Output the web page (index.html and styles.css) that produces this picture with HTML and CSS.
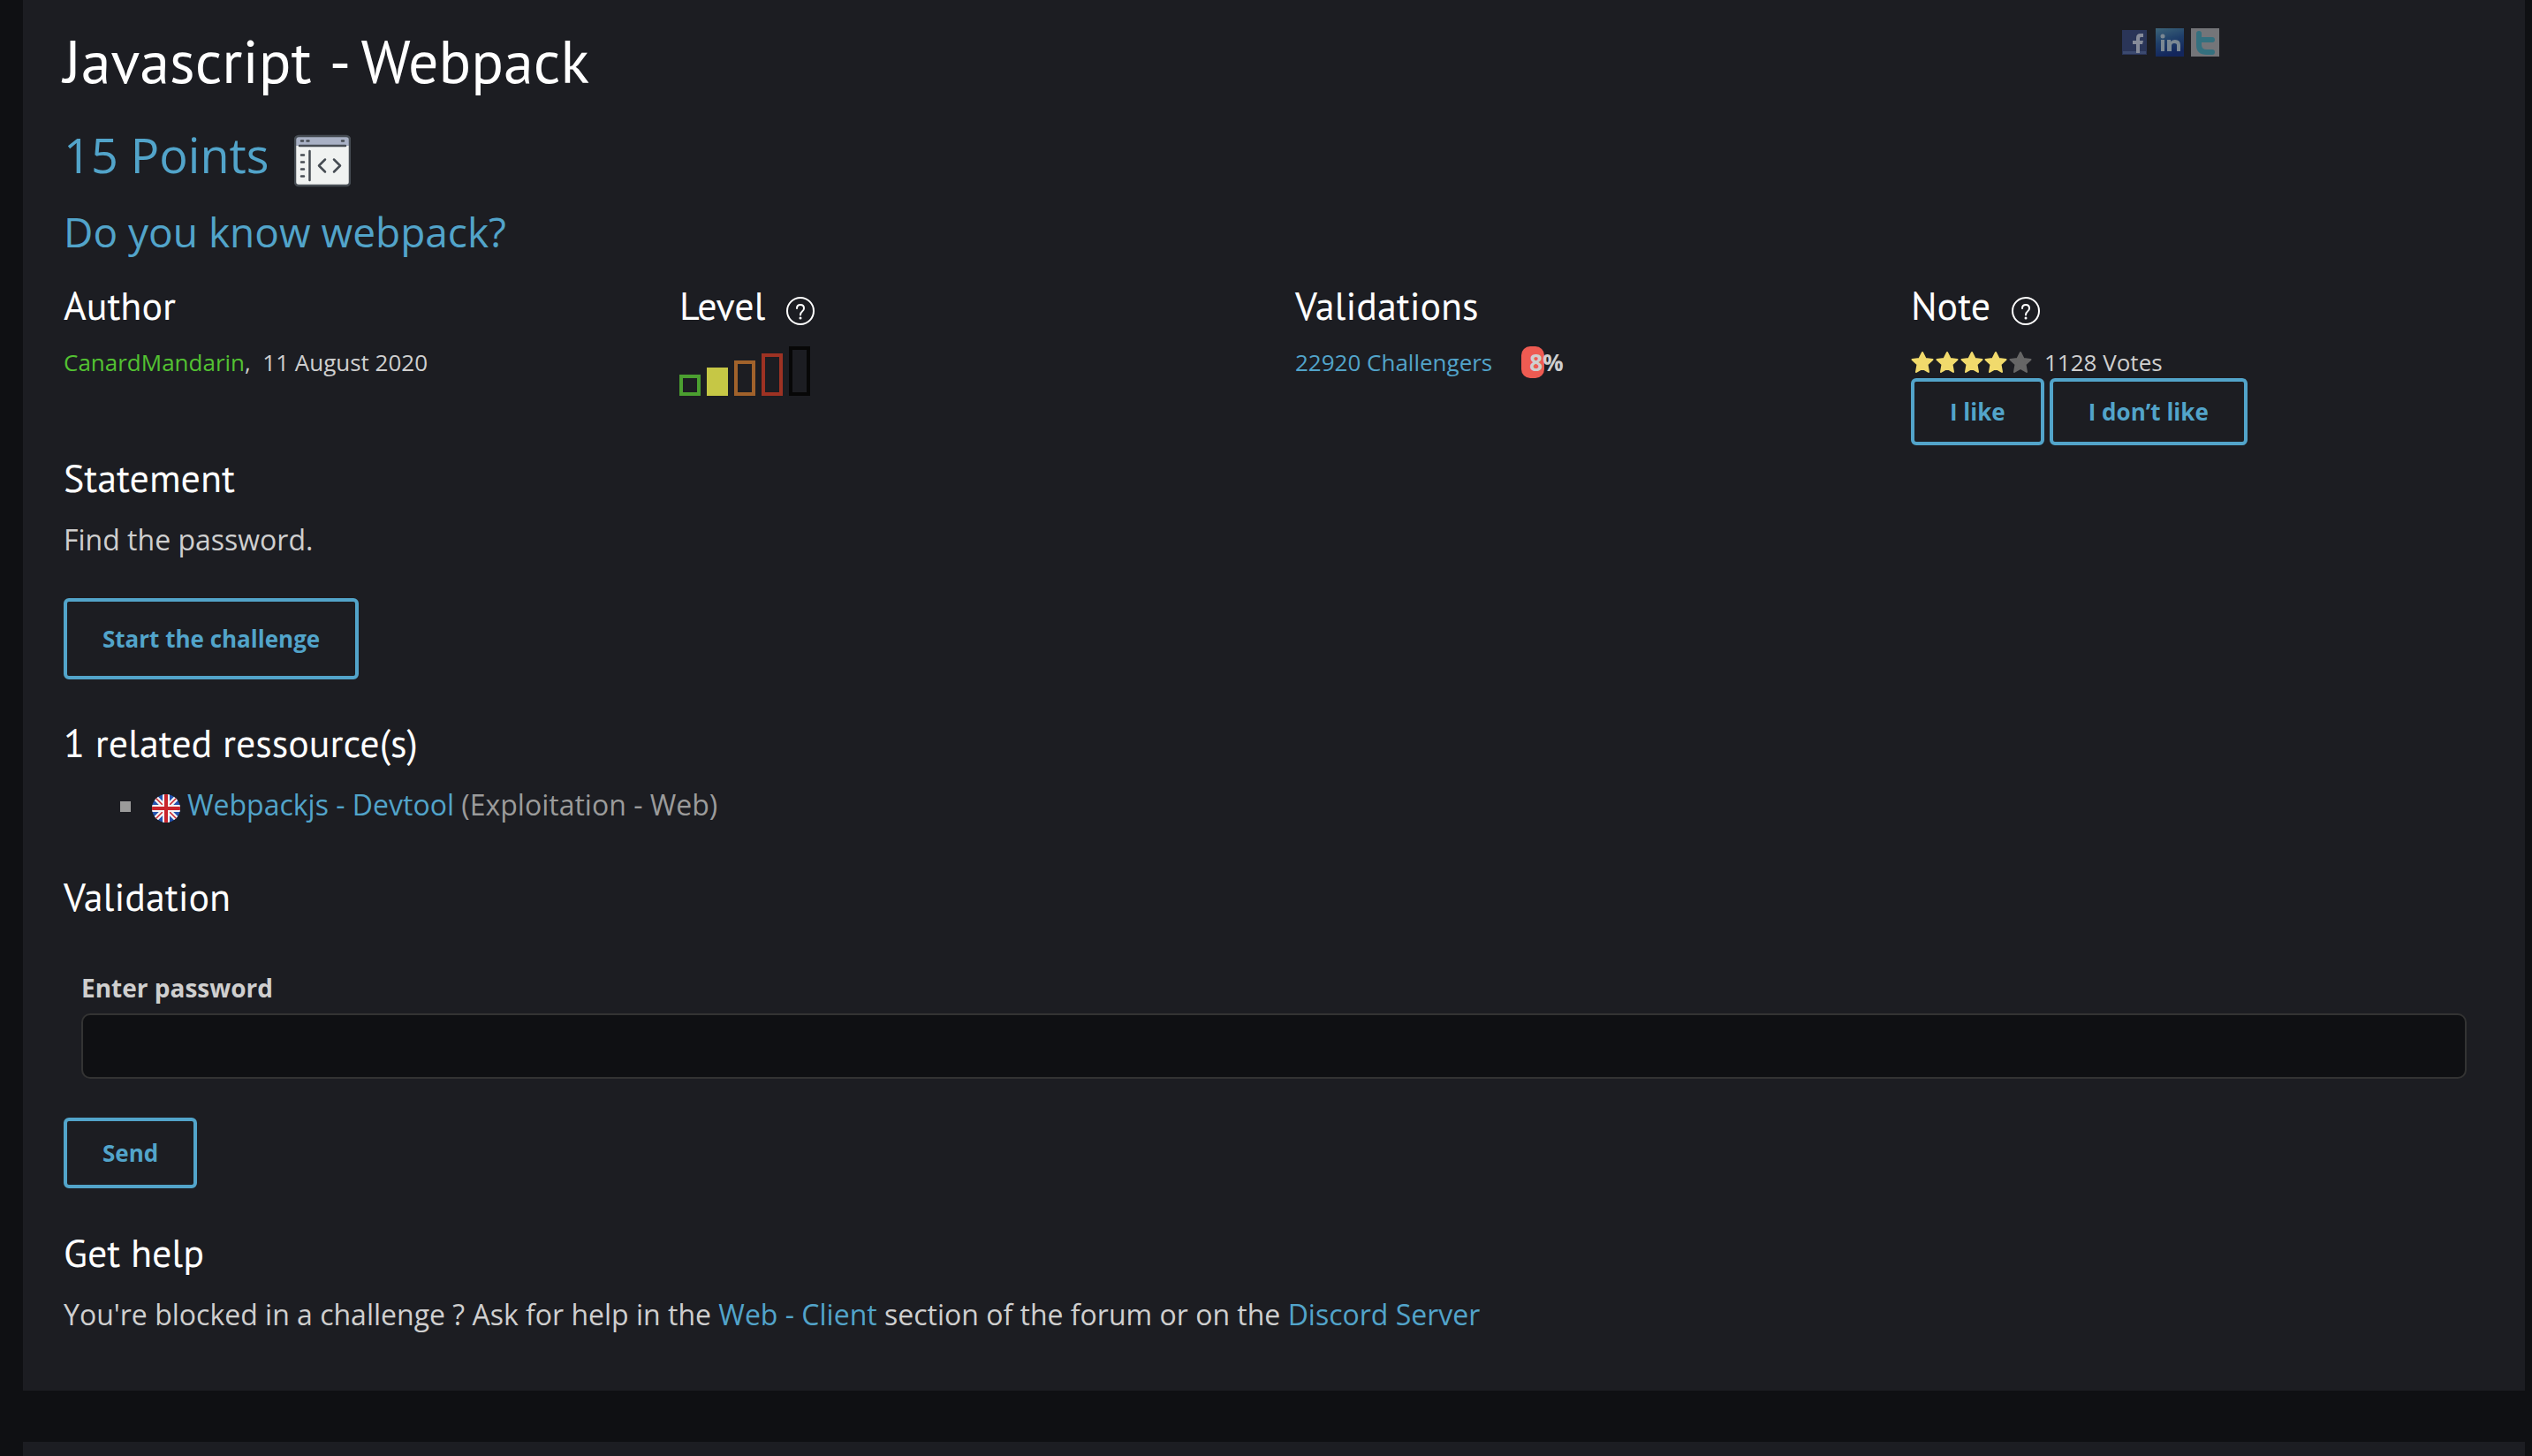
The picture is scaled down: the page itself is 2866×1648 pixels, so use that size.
FILE: index.html
```html
<!DOCTYPE html>
<html lang="en">
<head>
<meta charset="utf-8">
<title>Javascript - Webpack</title>
<link rel="stylesheet" href="styles.css">
</head>
<body>
<main class="panel">
  <header class="title-row">
    <h1 class="title">Javascript <span class="title-name">- Webpack</span></h1>
    <nav class="social" aria-label="Share">
      <a href="#facebook" aria-label="Facebook"><svg class="social-icon" viewBox="0 0 32 32"><rect x="2" y="2" width="28" height="28" fill="#2a3558"/><path d="M3 26h26v3H3z" fill="#3c4a70"/><path d="M18 28V18h-4v-4h4v-3q0-5 5-5h3v4h-3q-1 0-1 2v2h4l-1 4h-3v10z" fill="#868b99"/></svg></a>
      <a href="#linkedin" aria-label="LinkedIn"><svg class="social-icon" viewBox="0 0 32 32"><defs><linearGradient id="li" x1="0" y1="0" x2="0.3" y2="1"><stop offset="0" stop-color="#3d6478"/><stop offset="0.5" stop-color="#20406a"/><stop offset="1" stop-color="#13265c"/></linearGradient></defs><rect width="32" height="32" fill="url(#li)"/><circle cx="8" cy="9" r="2.500" fill="#7b8893"/><path d="M6 13h4v13H6zM13 13h4v2q2-2 5-2 6 0 6 6v7h-4v-7q0-2-3-2t-3 3v6h-5z" fill="#7b8893"/></svg></a>
      <a href="#twitter" aria-label="Twitter"><svg class="social-icon" viewBox="0 0 32 32"><rect width="32" height="32" fill="#747579"/><path d="M9 6v13q0 8 9 8h6M9 13h15" fill="none" stroke="#34707f" stroke-width="6" stroke-linecap="round"/></svg></a>
    </nav>
  </header>

  <div class="points">
    <span>15 Points</span>
    <svg class="points-icon" viewBox="0 0 64 64" aria-hidden="true"><rect x="1" y="4" width="62" height="56" rx="4" fill="#f0f2f1"/><path d="M1 15V8q0-4 4-4h54q4 0 4 4v7z" fill="#a9b1c5"/><rect x="1" y="4" width="62" height="56" rx="4" fill="none" stroke="#464c53" stroke-width="2.500"/><g fill="none" stroke="#464c53" stroke-width="2.500" stroke-linecap="round" stroke-linejoin="round"><path d="M6 15h52M8 9.500h2M14.500 9.500h2M54 9.500h2M8 25.500h3M8 33.500h3M8 41.500h3M8 49.500h3M17.500 21v33"/><path d="m35 30.500-7 7 7 7M45 30.500l7 7-7 7"/></g></svg>
  </div>
  <p class="subtitle">Do you know webpack?</p>

  <div class="facts">
    <section>
      <h2 class="heading">Author</h2>
      <p class="fact"><a class="author" href="#author">CanardMandarin</a>,&nbsp; 11 August 2020</p>
    </section>
    <section>
      <h2 class="heading">Level <svg class="help" viewBox="0 0 32 32" role="img" aria-label="Help"><circle cx="16" cy="16" r="15"/><path d="M12 13q0-4 4-4t4 4q0 2-2 3.500t-2 4"/><circle class="dot" cx="16" cy="24" r="1.500"/></svg></h2>
      <div class="level" role="img" aria-label="Easy">
        <span class="bar bar-1"></span><span class="bar bar-2"></span><span class="bar bar-3"></span><span class="bar bar-4"></span><span class="bar bar-5"></span>
      </div>
    </section>
    <section>
      <h2 class="heading">Validations</h2>
      <p class="fact validations"><a href="#challengers">22920 Challengers</a><span class="rate">8%</span></p>
    </section>
    <section>
      <h2 class="heading">Note <svg class="help" viewBox="0 0 32 32" role="img" aria-label="Help"><circle cx="16" cy="16" r="15"/><path d="M12 13q0-4 4-4t4 4q0 2-2 3.500t-2 4"/><circle class="dot" cx="16" cy="24" r="1.500"/></svg></h2>
      <p class="fact votes">
        <svg class="stars" viewBox="0 0 138 26" role="img" aria-label="4 out of 5"><defs><path id="star" d="M13 2l3.500 7 8 1-6 5.500 1.500 8.500-7-4-7 4 1.500-8.500-6-5.500 8-1z" stroke-width="2" stroke-linejoin="round"/></defs><g fill="#f1da6c" stroke="#f1da6c"><use href="#star"/><use href="#star" x="28"/><use href="#star" x="56"/><use href="#star" x="83"/></g><use href="#star" x="111" fill="#666" stroke="#666"/></svg>
        <span>1128 Votes</span>
      </p>
      <div class="vote-buttons">
        <button class="button button-vote" type="button">I like</button>
        <button class="button button-vote" type="button">I don’t like</button>
      </div>
    </section>
  </div>

  <section class="statement">
    <h2 class="heading">Statement</h2>
    <p class="text">Find the password.</p>
    <button class="button button-start" type="button">Start the challenge</button>
  </section>

  <section class="resources">
    <h2 class="heading">1 related ressource(s)</h2>
    <ul class="resource-list">
      <li class="resource">
        <svg class="flag" viewBox="0 0 32 32" role="img" aria-label="English"><defs><clipPath id="round"><circle cx="16" cy="16" r="16"/></clipPath></defs><g clip-path="url(#round)"><path d="M0 0h32v32H0z" fill="#2453ae"/><path d="M0 0l32 32M32 0L0 32" stroke="#f3f3f3" stroke-width="6"/><path d="M0 0l32 32M32 0L0 32" stroke="#c9242b" stroke-width="1.500"/><path d="M16 0v32M0 16h32" stroke="#f3f3f3" stroke-width="8"/><path d="M16 0v32M0 16h32" stroke="#c9242b" stroke-width="4"/></g></svg>
        <span><a href="#webpackjs">Webpackjs - Devtool</a> (Exploitation - Web)</span>
      </li>
    </ul>
  </section>

  <section class="validation">
    <h2 class="heading">Validation</h2>
    <form class="form">
      <div class="field">
        <label class="label" for="password">Enter password</label>
        <input class="input" id="password" name="password" type="text">
      </div>
      <button class="button button-send" type="button">Send</button>
    </form>
  </section>

  <section class="get-help">
    <h2 class="heading">Get help</h2>
    <p class="text">You're blocked in a challenge ? Ask for help in the <a href="#forum">Web - Client</a> section of the forum or on the <a href="#discord">Discord Server</a></p>
  </section>
</main>
<div class="panel panel-next"></div>
</body>
</html>
```

FILE: styles.css
```css
* { box-sizing: border-box; }

body {
  margin: 0;
  padding: 0 8px 0 26px;
  background: #0f1013;
  color: #cfcfcf;
  font: 32px/52px "Open Sans", "Noto Sans", sans-serif;
  overflow: hidden;
}

h1, h2, p, ul { margin: 0; padding: 0; }
a { color: #52a4ca; text-decoration: none; }

.panel {
  background: #1c1d22;
  padding: 20px 46px 60px;
}
.panel-next { margin-top: 58px; }

.title-row {
  display: flex;
  justify-content: space-between;
  padding-right: 300px;
}
.title {
  color: #fff;
  font: 400 68px/98px "PT Sans", Lato, sans-serif;
}
.title-name { margin-left: 2px; }
.social { display: flex; gap: 8px; padding-top: 12px; }
.social-icon { display: block; width: 32px; height: 32px; }

.points {
  display: flex;
  align-items: flex-end;
  gap: 29px;
  margin-top: 18px;
  color: #52a4ca;
  font-size: 54px;
  line-height: 78px;
}
.points-icon { width: 64px; height: 64px; }
.subtitle {
  margin-top: 16px;
  color: #52a4ca;
  font-size: 46px;
  line-height: 64px;
}

.heading {
  display: flex;
  align-items: center;
  gap: 24px;
  margin-bottom: 12px;
  color: #fff;
  font: 400 44px/64px "PT Sans", Lato, sans-serif;
}
.help {
  width: 32px;
  height: 32px;
  margin-top: 12px;
  fill: none;
  stroke: #fff;
  stroke-width: 2;
  stroke-linecap: round;
}
.dot { fill: #fff; stroke: none; }

.facts {
  display: grid;
  grid-template-columns: repeat(4, 1fr);
  margin: 20px -48px 0 0;
}
.fact { padding-top: 2px; font-size: 26px; line-height: 36px; }
.author { color: #53c232; }

.level { display: flex; align-items: flex-end; gap: 7px; padding-top: 2px; }
.bar { width: 24px; border: 4px solid; }
.bar-1 { height: 24px; color: #4b9f30; }
.bar-2 { height: 32px; color: #c6c745; background: #c6c745; }
.bar-3 { height: 40px; color: #a1622b; }
.bar-4 { height: 48px; color: #9e3223; }
.bar-5 { height: 56px; color: #070707; }

.validations, .votes { display: flex; align-items: center; }
.validations { gap: 33px; }
.rate {
  width: 26px;
  height: 36px;
  padding-left: 9px;
  border-radius: 10px;
  background: #ee5b52;
  font-weight: 700;
}
.votes { gap: 13px; }
.stars { width: 138px; height: 26px; }
.vote-buttons { display: flex; gap: 6px; }

.button {
  display: block;
  padding: 0 40px;
  border: 4px solid #52a4ca;
  border-radius: 6px;
  background: transparent;
  color: #52a4ca;
  font: 700 26px/36px "Open Sans", "Noto Sans", sans-serif;
}
.button-vote { height: 76px; }
.button-start { height: 92px; margin-top: 40px; }
.button-send { height: 80px; margin-top: 44px; }

.statement { margin-top: 5px; }
.resources { margin-top: 40px; }
.validation { margin-top: 46px; }
.get-help { margin-top: 41px; }

.resource-list { padding-left: 64px; list-style: none; }
.resource {
  display: flex;
  align-items: center;
  color: #9b9b9b;
}
.resource::before {
  content: "";
  width: 12px;
  height: 12px;
  margin: 4px 24px 0 0;
  background: #9b9b9b;
}
.flag { width: 32px; height: 32px; margin: 8px 8px 0 0; }

.form { margin-top: 42px; }
.field { padding: 0 20px; }
.label {
  display: block;
  font-size: 28px;
  font-weight: 700;
  line-height: 58px;
}
.input {
  display: block;
  width: 100%;
  height: 74px;
  padding: 0 16px;
  border: 2px solid #333;
  border-radius: 10px;
  background: #0f1013;
  color: #cfcfcf;
  font: inherit;
}
```
